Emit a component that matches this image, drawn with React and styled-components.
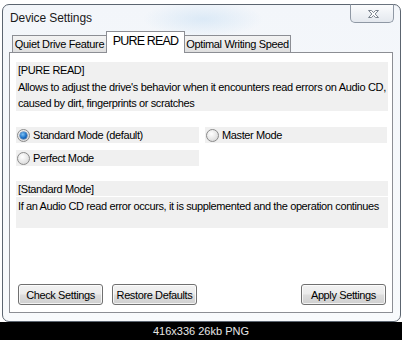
import React from "react";
import styled, { createGlobalStyle } from "styled-components";

const Global = createGlobalStyle`
  html, body { margin: 0; padding: 0; background: #000; }
  body { font-family: "Liberation Sans", Arial, sans-serif; }
  * { box-sizing: border-box; }
`;

const Page = styled.div`
  width: 402px;
  height: 340px;
  display: flex;
  flex-direction: column;
  overflow: hidden;
`;

const Shot = styled.div`
  height: 322px;
  background: #ffffff;
  padding: 4px 3px 0 2px;
  display: flex;
`;

const Window = styled.div`
  flex: 1;
  height: 318px;
  border: 1px solid #5c6570;
  border-radius: 7px;
  background:
    radial-gradient(ellipse 60px 18px at 200px 14px, rgba(175, 210, 240, 0.35), rgba(255,255,255,0) 100%),
    linear-gradient(#f3f6fa, #f8fafc);
  display: flex;
  flex-direction: column;
  padding: 0 7px 8px 6px;
`;

const Caption = styled.div`
  height: 27px;
  display: flex;
  justify-content: space-between;
  align-items: flex-start;
`;

const Title = styled.div`
  font-size: 12px;
  color: #1a1a1a;
  padding: 6px 0 0 1px;
  letter-spacing: -0.1px;
`;

const CloseButton = styled.div`
  width: 44px;
  height: 19px;
  margin-top: -1px;
  margin-right: -1px;
  border: 1px solid #8f98a4;
  border-top-color: #6a737e;
  border-radius: 0 0 5px 5px;
  background: linear-gradient(#fbfcfd, #eef1f5 55%, #e4e8ee);
  display: flex;
  align-items: center;
  justify-content: center;
  padding-left: 4px;
`;

const TabStrip = styled.div`
  height: 20px;
  display: flex;
  align-items: flex-end;
  padding-left: 3px;
`;

const Tab = styled.div`
  position: relative;
  width: ${(p) => p.$w}px;
  height: ${(p) => (p.$active ? 22 : 17)}px;
  margin-bottom: ${(p) => (p.$active ? -1 : 0)}px;
  margin-left: ${(p) => p.$ml || 0}px;
  z-index: ${(p) => (p.$active ? 2 : 1)};
  border: 1px solid #8c8e94;
  border-bottom: none;
  background: ${(p) =>
    p.$active ? "#ffffff" : "linear-gradient(#f3f3f3, #ebebeb 50%, #dedede)"};
  font-size: ${(p) => (p.$active ? "12.5px" : "11px")};
  letter-spacing: ${(p) => (p.$active ? "-0.85px" : "-0.35px")};
  color: #000;
  display: flex;
  align-items: center;
  justify-content: center;
  padding-bottom: ${(p) => (p.$active ? 3 : 0)}px;
  white-space: nowrap;
`;

const Panel = styled.div`
  flex: 1;
  border: 1px solid #8c8e94;
  background: #ffffff;
  display: flex;
  flex-direction: column;
  padding: 9px 4px 7px 6px;
`;

const Text = styled.div`
  font-size: 11px;
  letter-spacing: ${(p) => p.$ls ?? -0.38}px;
  color: #000;
  line-height: ${(p) => p.$lh || 16}px;
  white-space: nowrap;
`;

const InfoBox = styled.div`
  background: #f0f0f0;
  height: 49px;
  padding: 0 2px;
  display: flex;
  flex-direction: column;
  line-height: 16.5px;
`;

const RadioGrid = styled.div`
  margin-top: 16px;
  display: grid;
  grid-template-columns: 183px 182px;
  column-gap: 6px;
  row-gap: 7px;
`;

const RadioCell = styled.label`
  height: 16px;
  background: #f0f0f0;
  display: flex;
  align-items: center;
  gap: 3px;
  padding-left: 1px;
`;

const RadioDot = styled.span`
  width: 13px;
  height: 13px;
  border-radius: 50%;
  border: 1px solid #8a8a8a;
  background: radial-gradient(circle at 40% 35%, #ffffff, #e6e6e6 55%, #cfcfcf);
  display: flex;
  align-items: center;
  justify-content: center;
  flex: none;
  &::after {
    content: "";
    width: 7px;
    height: 7px;
    border-radius: 50%;
    display: ${(p) => (p.$checked ? "block" : "none")};
    background: radial-gradient(circle at 40% 35%, #7ec3f5, #1a6fc6 55%, #0b3f86);
    box-shadow: 0 0 0 0.5px #2a5e9a;
  }
`;

const ModeBox = styled.div`
  margin-top: 15px;
  display: flex;
  flex-direction: column;
  gap: 1px;
`;

const ModeHead = styled.div`
  height: 15px;
  background: #f0f0f0;
  padding: 0 2px;
  display: flex;
  align-items: center;
`;

const ModeBody = styled.div`
  height: 31px;
  background: #f0f0f0;
  padding: 1px 2px 0;
`;

const ButtonRow = styled.div`
  margin-top: auto;
  display: flex;
  gap: 9px;
  padding: 0 2px;
`;

const Button = styled.div`
  width: ${(p) => p.$w}px;
  height: 21px;
  margin-left: ${(p) => (p.$push ? "auto" : "0")};
  border: 1px solid #707070;
  border-radius: 3px;
  background: linear-gradient(#f2f2f2, #ebebeb 48%, #dddddd 52%, #cfcfcf);
  box-shadow: inset 0 0 0 1px rgba(255, 255, 255, 0.75);
  font-size: 11px;
  letter-spacing: -0.38px;
  color: #000;
  display: flex;
  align-items: center;
  justify-content: center;
  white-space: nowrap;
`;

const Footer = styled.div`
  height: 18px;
  background: #000;
  color: #e6e6e6;
  font-size: 11px;
  display: flex;
  align-items: center;
  justify-content: center;
`;

const CloseGlyph = () => (
  <svg width="15" height="10" viewBox="0 0 15 10">
    <path
      d="M2.5 1.5 H5.5 L7.5 3.6 L9.5 1.5 H12.5 L9.1 5 L12.5 8.5 H9.5 L7.5 6.4 L5.5 8.5 H2.5 L5.9 5 Z"
      fill="#ffffff"
      stroke="#7a838e"
      strokeWidth="1"
      strokeLinejoin="round"
    />
  </svg>
);

const Radio = ({ checked, children }) => (
  <RadioCell>
    <RadioDot $checked={checked} />
    <Text>{children}</Text>
  </RadioCell>
);

export default function App() {
  return (
    <Page>
      <Global />
      <Shot>
        <Window>
          <Caption>
            <Title>Device Settings</Title>
            <CloseButton>
              <CloseGlyph />
            </CloseButton>
          </Caption>
          <TabStrip>
            <Tab $w={95}>Quiet Drive Feature</Tab>
            <Tab $w={79} $active $ml={-1}>PURE READ</Tab>
            <Tab $w={107} $ml={-1}>Optimal Writing Speed</Tab>
          </TabStrip>
          <Panel>
            <InfoBox>
              <Text $lh={16.5}>[PURE READ]</Text>
              <Text $lh={16.5} $ls={-0.33}>
                Allows to adjust the drive's behavior when it encounters read errors on Audio CD,
              </Text>
              <Text $lh={16.5}>caused by dirt, fingerprints or scratches</Text>
            </InfoBox>
            <RadioGrid>
              <Radio checked>Standard Mode (default)</Radio>
              <Radio>Master Mode</Radio>
              <Radio>Perfect Mode</Radio>
            </RadioGrid>
            <ModeBox>
              <ModeHead>
                <Text>[Standard Mode]</Text>
              </ModeHead>
              <ModeBody>
                <Text>
                  If an Audio CD read error occurs, it is supplemented and the operation continues
                </Text>
              </ModeBody>
            </ModeBox>
            <ButtonRow>
              <Button $w={85}>Check Settings</Button>
              <Button $w={85}>Restore Defaults</Button>
              <Button $w={85} $push>Apply Settings</Button>
            </ButtonRow>
          </Panel>
        </Window>
      </Shot>
      <Footer>416x336 26kb PNG</Footer>
    </Page>
  );
}
